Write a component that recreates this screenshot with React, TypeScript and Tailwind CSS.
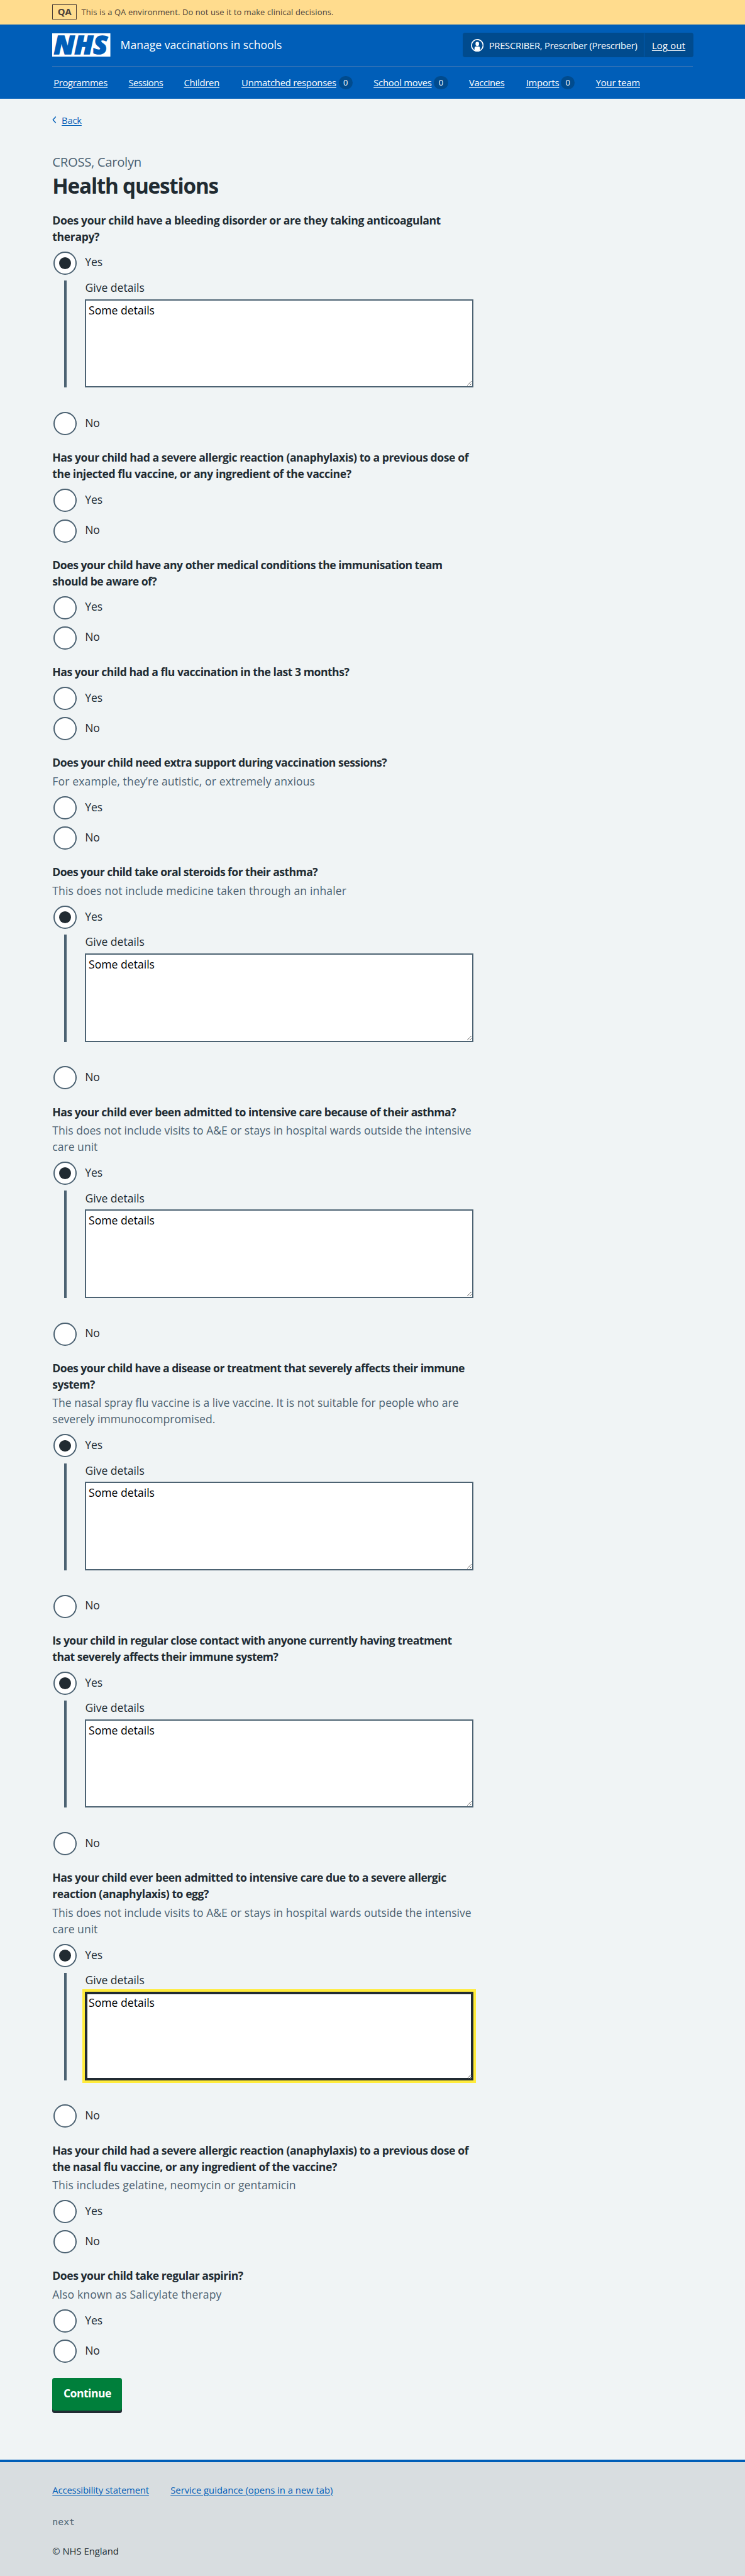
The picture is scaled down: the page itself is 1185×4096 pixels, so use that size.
import React from "react";

type Question = {
  title: string[];
  tracking?: string;
  hint?: string[];
  details?: string;
  focused?: boolean;
};

const QUESTIONS: Question[] = [
  {
    title: ["Does your child have a bleeding disorder or are they taking anticoagulant", "therapy?"],
    tracking: "tracking-[-0.0205em]",
    details: "Some details",
  },
  {
    title: [
      "Has your child had a severe allergic reaction (anaphylaxis) to a previous dose of",
      "the injected flu vaccine, or any ingredient of the vaccine?",
    ],
    tracking: "tracking-[-0.024em]",
  },
  { title: ["Does your child have any other medical conditions the immunisation team", "should be aware of?"] },
  { title: ["Has your child had a flu vaccination in the last 3 months?"] },
  {
    title: ["Does your child need extra support during vaccination sessions?"],
    hint: ["For example, they’re autistic, or extremely anxious"],
  },
  {
    title: ["Does your child take oral steroids for their asthma?"],
    tracking: "tracking-[-0.032em]",
    hint: ["This does not include medicine taken through an inhaler"],
    details: "Some details",
  },
  {
    title: ["Has your child ever been admitted to intensive care because of their asthma?"],
    hint: ["This does not include visits to A&E or stays in hospital wards outside the intensive", "care unit"],
    details: "Some details",
  },
  {
    title: ["Does your child have a disease or treatment that severely affects their immune", "system?"],
    tracking: "tracking-[-0.0295em]",
    hint: ["The nasal spray flu vaccine is a live vaccine. It is not suitable for people who are", "severely immunocompromised."],
    details: "Some details",
  },
  {
    title: ["Is your child in regular close contact with anyone currently having treatment", "that severely affects their immune system?"],
    tracking: "tracking-[-0.0295em]",
    details: "Some details",
  },
  {
    title: ["Has your child ever been admitted to intensive care due to a severe allergic", "reaction (anaphylaxis) to egg?"],
    tracking: "tracking-[-0.025em]",
    hint: ["This does not include visits to A&E or stays in hospital wards outside the intensive", "care unit"],
    details: "Some details",
    focused: true,
  },
  {
    title: [
      "Has your child had a severe allergic reaction (anaphylaxis) to a previous dose of",
      "the nasal flu vaccine, or any ingredient of the vaccine?",
    ],
    tracking: "tracking-[-0.024em]",
    hint: ["This includes gelatine, neomycin or gentamicin"],
  },
  {
    title: ["Does your child take regular aspirin?"],
    hint: ["Also known as Salicylate therapy"],
  },
];

const NAV: { label: string; className: string; count?: number }[] = [
  { label: "Programmes", className: "w-23.25 tracking-[-0.02em]" },
  { label: "Sessions", className: "w-14.75 tracking-[-0.04em]" },
  { label: "Children", className: "w-15.75 tracking-[-0.015em]" },
  { label: "Unmatched responses", className: "w-40.75 tracking-[-0.016em]", count: 0 },
  { label: "School moves", className: "w-25 tracking-[-0.015em]", count: 0 },
  { label: "Vaccines", className: "w-15.5 tracking-[-0.025em]" },
  { label: "Imports", className: "w-14 tracking-[-0.015em]", count: 0 },
  { label: "Your team", className: "w-19.25 tracking-[-0.01em]" },
];

function NhsLogo() {
  return (
    <svg viewBox="0 0 100 40" className="h-10 w-25 shrink-0 overflow-visible" role="img" aria-label="NHS">
      <rect width="100" height="40" fill="#fff" />
      <text
        x="3"
        y="36"
        textLength="92"
        lengthAdjust="spacingAndGlyphs"
        fill="#005eb8"
        stroke="#005eb8"
        strokeWidth="1.8"
        fontFamily="Open Sans, sans-serif"
        fontSize="44"
        fontStyle="italic"
        fontWeight="800"
      >
        NHS
      </text>
    </svg>
  );
}

function UserIcon() {
  return (
    <svg viewBox="0 0 22 22" className="size-5.5 shrink-0" fill="#fff">
      <circle cx="11" cy="11" r="10" fill="none" stroke="#fff" strokeWidth="1.8" />
      <rect x="8" y="4.8" width="6" height="7" rx="2.4" />
      <path d="M6.2 18.8v-2.6a3.4 3.4 0 0 1 3.4-3.4h2.8a3.4 3.4 0 0 1 3.4 3.4v2.6A9.4 9.4 0 0 1 11 20.6a9.4 9.4 0 0 1-4.8-1.8z" />
    </svg>
  );
}

function Radio({ label, checked }: { label: string; checked?: boolean }) {
  return (
    <label className="flex h-11 items-center pl-0.5">
      <span className="flex size-10 items-center justify-center rounded-full border-2 border-[#4c6272] bg-white">
        {checked && <span className="size-5 rounded-full bg-[#212b32]" />}
      </span>
      <span className="pb-0.5 pl-3.5">{label}</span>
    </label>
  );
}

function QuestionField({ title, tracking = "tracking-[-0.0275em]", hint, details, focused }: Question) {
  return (
    <section className="flex flex-col pb-6">
      <h2 className={`-mt-0.25 mb-0.25 font-bold whitespace-nowrap ${tracking}`}>
        {title.map((line) => (
          <span key={line} className="block">
            {line}
          </span>
        ))}
      </h2>
      {hint && (
        <div
          className={
            hint.length > 1
              ? "mt-0.75 mb-0.25 whitespace-nowrap text-[#4c6272]"
              : "mt-0.75 mb-0.25 tracking-[0.007em] whitespace-nowrap text-[#4c6272]"
          }
        >
          {hint.map((line) => (
            <span key={line} className="block">
              {line}
            </span>
          ))}
        </div>
      )}
      <div className="mt-2 flex flex-col gap-2">
        <Radio label="Yes" checked={details !== undefined} />
        {details !== undefined && (
          <div className="mb-8 ml-5 border-l-4 border-[#4c6272] pl-8">
            <div className="-mt-0.25 pb-1.25">Give details</div>
            <textarea
              readOnly
              defaultValue={details}
              className={
                focused
                  ? "block h-38 w-166.75 resize border-2 border-[#212b32] bg-white px-1 pt-0.75 pb-1 text-black shadow-[inset_0_0_0_2px_#212b32] outline-4 outline-[#ffeb3b]"
                  : "block h-38 w-166.75 resize border-2 border-[#4c6272] bg-white px-1 pt-0.75 pb-1 text-black"
              }
            />
          </div>
        )}
        <Radio label="No" />
      </div>
    </section>
  );
}

export default function App() {
  return (
    <div className="flex min-h-[4096px] w-[1185px] flex-col bg-[#f0f4f5] font-['Open_Sans',sans-serif] text-[17.59px] leading-7 text-[#212b32] [--spacing:3.703px]">
      <div className="flex h-10.5 items-center bg-[#ffdc8e] px-22.5 text-[#4d3f38]">
        <strong className="flex h-6.5 w-10.5 items-center justify-center border border-[#4d3f38] pb-0.5 text-[14.8px] leading-none font-bold">
          QA
        </strong>
        <span className="pl-2 text-[12.95px] leading-5 tracking-[0.009em] whitespace-nowrap">
          This is a QA environment. Do not use it to make clinical decisions.
        </span>
      </div>

      <header className="h-32 bg-[#005eb8] px-22.5 text-white">
        <div className="flex h-18 items-center justify-between border-b border-[#3975b5]">
          <div className="flex items-center">
            <NhsLogo />
            <span className="pl-4.25 whitespace-nowrap">Manage vaccinations in schools</span>
          </div>
          <div className="-mr-0.25 flex h-10.5 w-99 items-center rounded-[4px] bg-[#004b8e] text-[14.8px] leading-6 whitespace-nowrap">
            <div className="flex h-10 w-78 items-center gap-2.25 border-r border-[#005eb8] pl-3.5">
              <UserIcon />
              <span className="tracking-[-0.018em]">PRESCRIBER, Prescriber (Prescriber)</span>
            </div>
            <a className="pl-3.25 tracking-[0.015em] underline decoration-1 underline-offset-2">Log out</a>
          </div>
        </div>
        <nav className="flex h-14 items-center gap-9 pl-0.5 text-[14.8px] leading-6">
          {NAV.map(({ label, className, count }) => (
            <div key={label} className="flex items-center gap-1">
              <a className={`${className} whitespace-nowrap underline decoration-1 underline-offset-2`}>{label}</a>
              {count !== undefined && (
                <span className="flex h-5.5 w-6 items-center justify-center rounded-full bg-[#004b8e] text-[12.95px] leading-none">
                  {count}
                </span>
              )}
            </div>
          ))}
        </nav>
      </header>

      <main className="h-[3754px] px-22.5 pt-6">
        <div className="flex h-6 items-center gap-2.25 text-[14.8px] leading-6 text-[#005eb8]">
          <svg viewBox="0 0 7 12" className="h-3 w-1.75" fill="none" stroke="#005eb8" strokeWidth="1.5">
            <path d="M6.2 0.6 1.4 6l4.8 5.4" />
          </svg>
          <a className="tracking-[-0.015em] underline decoration-1 underline-offset-2">Back</a>
        </div>
        <h1 className="flex flex-col pt-11.25 pb-6.25">
          <span className="text-[20.35px] leading-8 tracking-[-0.0175em] text-[#4c6272]">CROSS, Carolyn</span>
          <span className="pt-0.5 text-[33.3px] leading-11 font-bold tracking-[-0.037em]">Health questions</span>
        </h1>

        {QUESTIONS.map((question, index) => (
          <QuestionField key={index} {...question} />
        ))}

        <button className="flex h-14 w-30 items-center justify-center rounded-[4px] bg-[#007f3b] pb-0.5 font-bold tracking-[-0.03em] text-white shadow-[0_4px_0_#212b32]">
          Continue
        </button>
      </main>

      <footer className="flex-1 border-t-4 border-[#005eb8] bg-[#d8dde0] px-22.5 pt-8.75 text-[14.8px] leading-6">
        <div className="flex gap-9.25 whitespace-nowrap text-[#005eb8]">
          <a className="w-41.5 tracking-[-0.01em] underline decoration-1 underline-offset-2">Accessibility statement</a>
          <a className="underline decoration-1 underline-offset-2">Service guidance (opens in a new tab)</a>
        </div>
        <div className="mt-7.75 font-['DejaVu_Sans_Mono',monospace] text-[#4c6272]">next</div>
        <div className="mt-6.5">© NHS England</div>
      </footer>
    </div>
  );
}
